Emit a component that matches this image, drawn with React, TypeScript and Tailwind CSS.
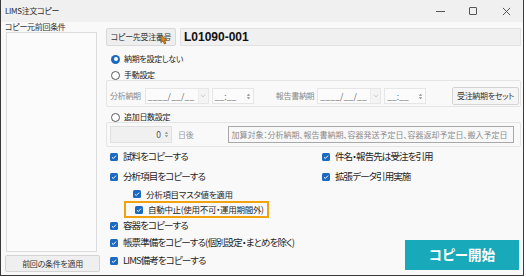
import React from 'react';

const jp = "font-['Noto_Sans_CJK_JP',sans-serif] [font-feature-settings:'palt']";
const small = 'text-[8px] tracking-[-0.3px] leading-none';
const sub = 'text-[8.5px] tracking-[-0.3px] leading-none';
const big = 'text-[9.5px] tracking-[-0.9px] leading-none';

const Check: React.FC = () => (
  <span className="w-[8px] h-[8px] rounded-[1.5px] bg-[#1c69c2] flex items-center justify-center shrink-0">
    <svg viewBox="0 0 8 8" className="w-[6px] h-[6px]">
      <path d="M1.3 4.3 L3.1 6 L6.7 2.2" stroke="white" strokeWidth="1.3" fill="none" />
    </svg>
  </span>
);

const Radio: React.FC<{ on?: boolean }> = ({ on }) =>
  on ? (
    <span className="w-[9px] h-[9px] rounded-full bg-[#1c69c2] flex items-center justify-center shrink-0">
      <span className="w-[4px] h-[4px] rounded-full bg-white" />
    </span>
  ) : (
    <span className="w-[9px] h-[9px] rounded-full border border-[#5a5a5a] bg-white shrink-0" />
  );

const Spin: React.FC = () => (
  <svg viewBox="0 0 6 10" className="w-[5px] h-[9px] shrink-0">
    <path d="M1 4 L3 1.8 L5 4 Z" fill="#8a8a8a" />
    <path d="M1 6 L3 8.2 L5 6 Z" fill="#8a8a8a" />
  </svg>
);

const DateField: React.FC = () => (
  <div className="flex items-center">
    <div className="w-[64px] h-[16px] flex items-center bg-[#fbfbfb] border border-[#e6e6e6]">
      <span className="pl-[2px] text-[8.5px] leading-none text-[#666] tracking-[0.2px]">____/__/__</span>
      <span className="ml-auto w-[10px] h-full flex items-center justify-center bg-[#f4f4f4] border-l border-[#ececec]">
        <svg viewBox="0 0 8 6" className="w-[6px] h-[4px]">
          <path d="M1 1 L4 4.5 L7 1" stroke="#b8b8b8" strokeWidth="1" fill="none" />
        </svg>
      </span>
    </div>
    <div className="ml-[3px] w-[42px] h-[16px] flex items-center bg-[#fbfbfb] border border-[#e6e6e6]">
      <span className="pl-[2px] text-[8.5px] leading-none text-[#666]">__:__</span>
      <span className="ml-auto mr-[2px]">
        <Spin />
      </span>
    </div>
  </div>
);

const Row: React.FC<{ label: string; className?: string }> = ({ label, className = '' }) => (
  <div className={`h-[14px] flex items-center gap-[5px] ${className}`}>
    <Check />
    <span className={`${big} text-[#1e1e1e] whitespace-nowrap`}>{label}</span>
  </div>
);

export default function App() {
  return (
    <div className={`w-[526px] h-[277px] bg-white ${jp}`}>
      <div className="w-[524px] h-[276px] border-x border-b border-[#3a3a3a] bg-[#f9f9f9] flex flex-col">
        {/* title bar */}
        <div className="h-[22px] shrink-0 bg-[#f0f0f0] flex items-center">
          <span className={`pl-[4px] ${small} text-[#2a2a2a]`}>LIMS注文コピー</span>
          <div className="ml-auto flex items-center h-full">
            <span className="w-[34px] flex justify-center">
              <span className="w-[9px] h-[1px] bg-[#555]" />
            </span>
            <span className="w-[32px] flex justify-center">
              <span className="w-[8px] h-[8px] border border-[#555] rounded-[1px]" />
            </span>
            <span className="w-[34px] flex justify-center">
              <svg viewBox="0 0 10 10" className="w-[9px] h-[9px]">
                <path d="M1 1 L9 9 M9 1 L1 9" stroke="#444" strokeWidth="1" />
              </svg>
            </span>
          </div>
        </div>

        {/* body */}
        <div className="flex-1 flex min-h-0">
          {/* left column */}
          <div className="w-[100px] shrink-0 flex flex-col">
            <div className="h-[10px] flex items-center pl-[4px]">
              <span className={`${small} text-[#333]`}>コピー元前回条件</span>
            </div>
            <div className="ml-[5px] w-[91px] h-[220px] bg-[#fbfbfb] border border-[#dcdcdc]" />
            <button className={`mt-[3px] ml-[4px] w-[95px] h-[17px] bg-[#efefef] border border-[#d4d4d4] rounded-[2px] flex items-center justify-center ${small} text-[#333]`}>
              前回の条件を適用
            </button>
          </div>

          {/* main column */}
          <div className="flex-1 flex flex-col pt-[6px] pl-[5px] pr-[2px]">
            <div className="h-[18px] flex gap-[4px]">
              <div className="relative w-[70px] h-full bg-[#eeeeee] border border-[#d9d9d9] rounded-[2px] flex items-center justify-center">
                <span className={`${small} text-[#333] whitespace-nowrap`}>コピー先受注番号</span>
                <svg viewBox="0 0 10 12" className="absolute left-[53px] top-[5px] w-[9px] h-[11px]">
                  <path d="M1 1 L1 9.5 L3.3 7.6 L5 11 L6.6 10.2 L5 7 L8.2 7 Z" fill="#e08a1a" stroke="#5a3a10" strokeWidth="0.7" />
                </svg>
              </div>
              <div className="flex-1 h-full bg-[#f0f0f0] border border-[#e2e2e2] flex items-center pl-[3px]">
                <span className="font-['Liberation_Sans',sans-serif] font-bold text-[12px] leading-none text-[#111]">L01090-001</span>
              </div>
            </div>

            <div className="mt-[7px] h-[12px] flex items-center gap-[4px] pl-[5px]">
              <Radio on />
              <span className={`${small} text-[#222]`}>納期を設定しない</span>
            </div>

            <div className="mt-[5px] h-[10px] flex items-center gap-[4px] pl-[5px]">
              <Radio />
              <span className={`${small} text-[#222]`}>手動設定</span>
            </div>

            <div className="h-[27px] border border-[#e4e4e4] rounded-[2px] flex items-center pt-[5px] pr-[1px]">
              <span className={`pl-[3px] ${small} text-[#8a8a8a]`}>分析納期</span>
              <div className="ml-[4px]">
                <DateField />
              </div>
              <span className={`ml-[22px] ${small} text-[#8a8a8a]`}>報告書納期</span>
              <div className="ml-[3px]">
                <DateField />
              </div>
              <button className={`ml-auto w-[67px] h-[18px] bg-[#f5f5f5] border border-[#d4d4d4] rounded-[2px] flex items-center justify-center ${small} text-[#333]`}>
                受注納期をセット
              </button>
            </div>

            <div className="mt-[5px] h-[10px] flex items-center gap-[4px] pl-[5px]">
              <Radio />
              <span className={`${small} text-[#222]`}>追加日数設定</span>
            </div>

            <div className="h-[25px] border border-[#e4e4e4] rounded-[2px] flex items-center pl-[3px]">
              <div className="w-[62px] h-[17px] bg-[#f0f0f0] border border-[#e0e0e0] flex items-center justify-end pr-[2px] gap-[3px]">
                <span className="text-[8.5px] leading-none text-[#555]">0</span>
                <Spin />
              </div>
              <span className={`ml-[6px] ${small} text-[#9a9a9a]`}>日後</span>
              <div className="ml-[35px] w-[286px] h-[17px] bg-[#f8f8f8] border border-[#a8a8a8] flex items-center overflow-hidden pl-[2px]">
                <span className="text-[8px] leading-none text-[#8c8c8c] whitespace-nowrap">
                  加算対象：分析納期、報告書納期、容器発送予定日、容器返却予定日、搬入予定日
                </span>
              </div>
            </div>

            {/* check area */}
            <div className="flex-1 flex">
              <div className="w-[216px] shrink-0 flex flex-col items-start pl-[4px]">
                <Row label="試料をコピーする" className="mt-[3px]" />
                <Row label="分析項目をコピーする" className="mt-[6px]" />
                <div className="mt-[4px] h-[12px] flex items-center gap-[5px] pl-[23px]">
                  <Check />
                  <span className={`${sub} text-[#1e1e1e] whitespace-nowrap`}>分析項目マスタ値を適用</span>
                </div>
                <div className="mt-[1px] ml-[14px] h-[17px] border-2 border-[#f2a20f] flex items-center gap-[5px] pl-[9px] pr-[3px]">
                  <Check />
                  <span className={`${sub} text-[#1e1e1e] whitespace-nowrap`}>自動中止(使用不可・運用期間外)</span>
                </div>
                <Row label="容器をコピーする" className="mt-[1px]" />
                <Row label="帳票準備をコピーする(個別設定・まとめを除く)" className="mt-[3px]" />
                <Row label="LIMS備考をコピーする" className="mt-[4px]" />
              </div>
              <div className="flex-1 flex flex-col">
                <Row label="件名・報告先は受注を引用" className="mt-[3px]" />
                <Row label="拡張データ引用実施" className="mt-[6px]" />
                <button className="mt-auto mb-[5px] mr-[2px] self-end w-[114px] h-[30px] bg-[#18a9bb] flex items-center justify-center text-[13.5px] font-bold leading-none text-white">
                  コピー開始
                </button>
              </div>
            </div>
          </div>
        </div>
      </div>
    </div>
  );
}
